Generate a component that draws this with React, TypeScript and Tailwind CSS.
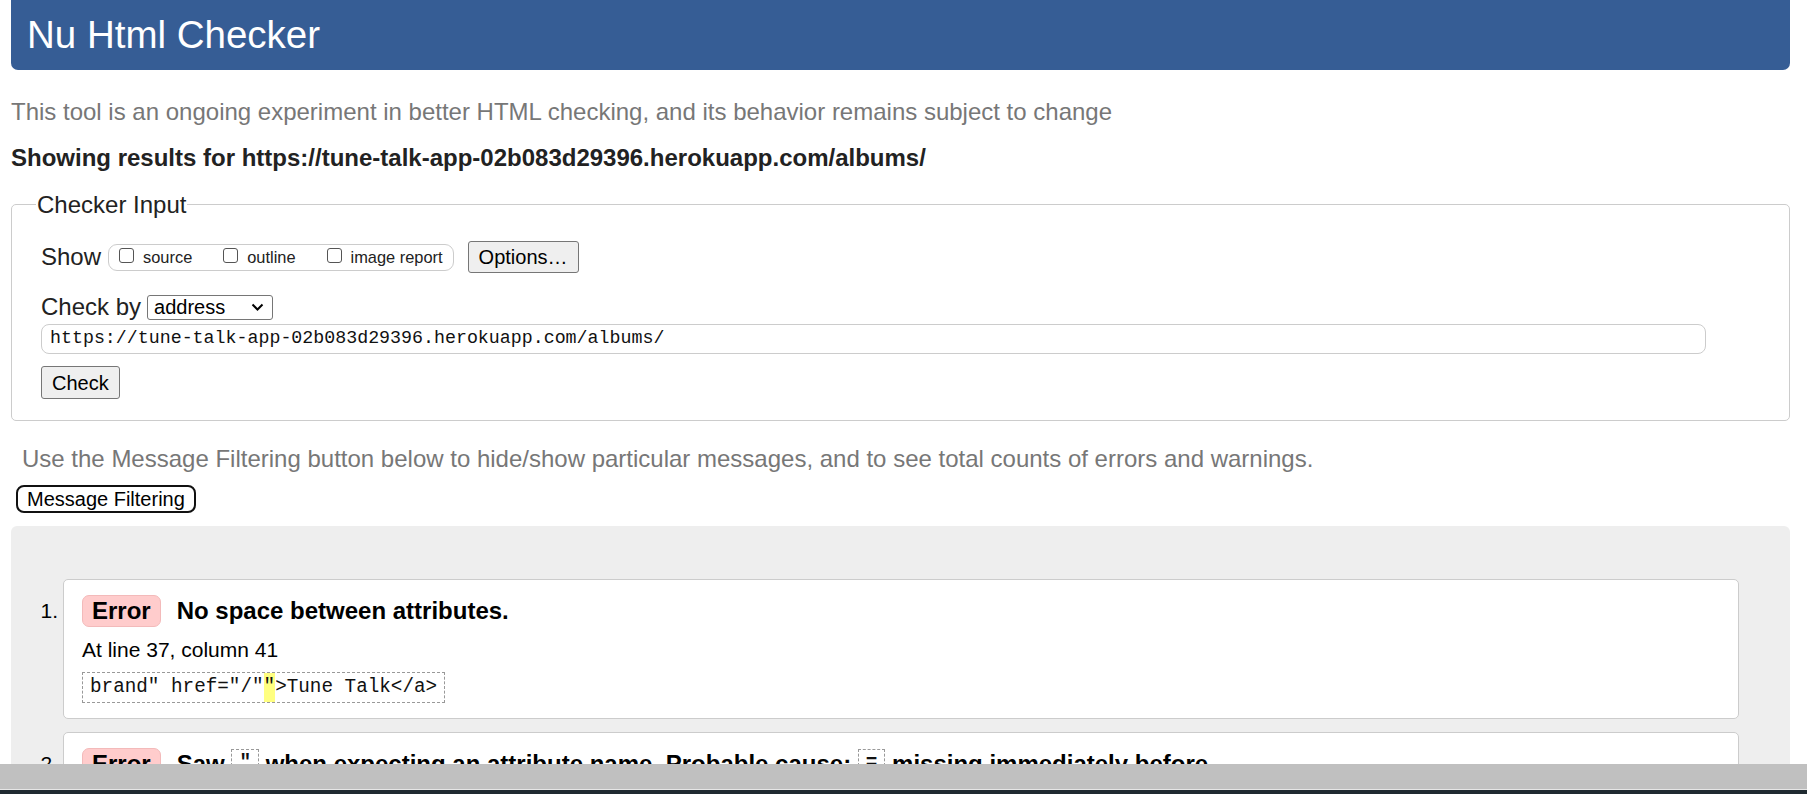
const mono = "font-['Liberation_Mono','Courier_New',monospace]";

const Checkbox = ({ label }: { label: string }) => (
  <span className="flex items-center">
    <span className="mb-[4px] h-[15px] w-[15px] rounded-[3px] border border-[#555] bg-white" />
    <span className="ml-[9px] text-[16.4px] leading-none text-[#222]">{label}</span>
  </span>
);

const GrayButton = ({ children, className = "" }: { children: React.ReactNode; className?: string }) => (
  <button
    className={`flex h-[32px] items-center rounded-[3px] border border-[#767676] bg-[#efefef] px-[10px] text-[20px] leading-none text-black ${className}`}
  >
    {children}
  </button>
);

const Badge = () => (
  <span className="flex h-[32px] items-center rounded-[7px] border border-[#f3baba] bg-[#fcc] px-[9px] text-[24px] font-bold leading-none">
    Error
  </span>
);

const Code = ({ children }: { children: React.ReactNode }) => (
  <span className={`inline-flex h-[31px] items-center border border-dashed border-[#999] px-[7px] text-[19.3px] text-[#111] ${mono}`}>
    {children}
  </span>
);

export default function App() {
  return (
    <div className="relative h-[794px] w-full overflow-hidden bg-white font-['Liberation_Sans',Arial,sans-serif] text-black">
      <div className="pl-[11px] pr-[17px]">
        <header className="flex h-[70px] items-center rounded-b-[7px] bg-[#365d95] pl-[16px]">
          <h1 className="text-[38.5px] leading-none text-white">Nu Html Checker</h1>
        </header>

        <p className="mt-[28px] text-[24px] leading-[27px] text-[#777]">
          This tool is an ongoing experiment in better HTML checking, and its behavior remains subject to change
        </p>
        <p className="mt-[19px] text-[24px] font-bold leading-[27px] text-[#222]">
          Showing results for https://tune-talk-app-02b083d29396.herokuapp.com/albums/
        </p>

        <fieldset className="mt-[20px] rounded-[5px] border border-[#ccc] pb-[21px] pl-[29px] pr-[20px]">
          <legend className="-ml-[5px] px-[1px] text-[24px] leading-[27px] text-[#222]">Checker Input</legend>

          <div className="mt-[23px] flex h-[32px] items-center">
            <span className="text-[24px] leading-none text-[#222]">Show</span>
            <div className="ml-[7px] flex h-[27px] items-center gap-[31px] rounded-[9px] border border-[#ccc] px-[10px]">
              <Checkbox label="source" />
              <Checkbox label="outline" />
              <Checkbox label="image report" />
            </div>
            <GrayButton className="ml-[14px]">Options…</GrayButton>
          </div>

          <div className="mt-[20px] flex h-[28px] items-center">
            <span className="text-[24px] leading-none text-[#222]">Check by</span>
            <div className="ml-[6px] flex h-[25px] w-[126px] items-center justify-between rounded-[3px] border border-[#767676] pl-[6px] pr-[8px]">
              <span className="text-[20px] leading-none">address</span>
              <svg width="13" height="8" viewBox="0 0 13 8" fill="none">
                <path d="M1.5 1.5 L6.5 6.5 L11.5 1.5" stroke="#000" strokeWidth="2" />
              </svg>
            </div>
          </div>

          <div className={`mt-[3px] flex h-[30px] w-[1665px] items-center rounded-[8px] border border-[#ccc] pl-[8px] text-[18.3px] text-[#111] ${mono}`}>
            https://tune-talk-app-02b083d29396.herokuapp.com/albums/
          </div>

          <GrayButton className="mt-[12px] h-[33px]">Check</GrayButton>
        </fieldset>

        <p className="mt-[24px] pl-[11px] text-[24px] leading-[27px] text-[#777]">
          Use the Message Filtering button below to hide/show particular messages, and to see total counts of errors and warnings.
        </p>
        <button className="ml-[5px] mt-[13px] flex h-[28px] items-center rounded-[8px] border-2 border-[#111] bg-white px-[9px] text-[20px] leading-none">
          Message Filtering
        </button>

        <div className="mt-[13px] rounded-t-[6px] bg-[#eee] pr-[51px] pt-[53px]">
          <ol className="flex flex-col gap-[13px]">
            <li className="flex">
              <span className="mt-[16px] w-[52px] pr-[5px] text-right text-[21px] leading-[32px]">1.</span>
              <div className="flex-1 rounded-[5px] border border-[#ccc] bg-white pb-[15px] pl-[18px] pt-[15px]">
                <div className="flex items-center gap-[16px]">
                  <Badge />
                  <span className="text-[24px] font-bold leading-none">No space between attributes.</span>
                </div>
                <p className="mt-[10px] text-[21px] leading-[25px]">At line 37, column 41</p>
                <div className="mt-[10px]">
                  <Code>
                    brand" href="/"<span className="bg-[#ffff80]">"</span>&gt;Tune Talk&lt;/a&gt;
                  </Code>
                </div>
              </div>
            </li>
            <li className="flex">
              <span className="mt-[16px] w-[52px] pr-[5px] text-right text-[21px] leading-[32px]">2.</span>
              <div className="flex-1 rounded-[5px] border border-[#ccc] bg-white pb-[15px] pl-[18px] pt-[15px]">
                <div className="flex items-center gap-[16px]">
                  <Badge />
                  <span className="flex items-center text-[24px] font-bold leading-none">
                    Saw&nbsp;<Code>"</Code>&nbsp;when expecting an attribute name. Probable cause:&nbsp;<Code>=</Code>&nbsp;missing immediately before.
                  </span>
                </div>
                <p className="mt-[10px] text-[21px] leading-[25px]">At line 37, column 42</p>
              </div>
            </li>
          </ol>
        </div>
      </div>

      <div className="absolute bottom-0 left-0 right-0">
        <div className="h-[25px] bg-[#c0c0c0]" />
        <div className="h-[1px] bg-[#e6e6e6]" />
        <div className="h-[4px] bg-[#1f2a31]" />
      </div>
    </div>
  );
}
